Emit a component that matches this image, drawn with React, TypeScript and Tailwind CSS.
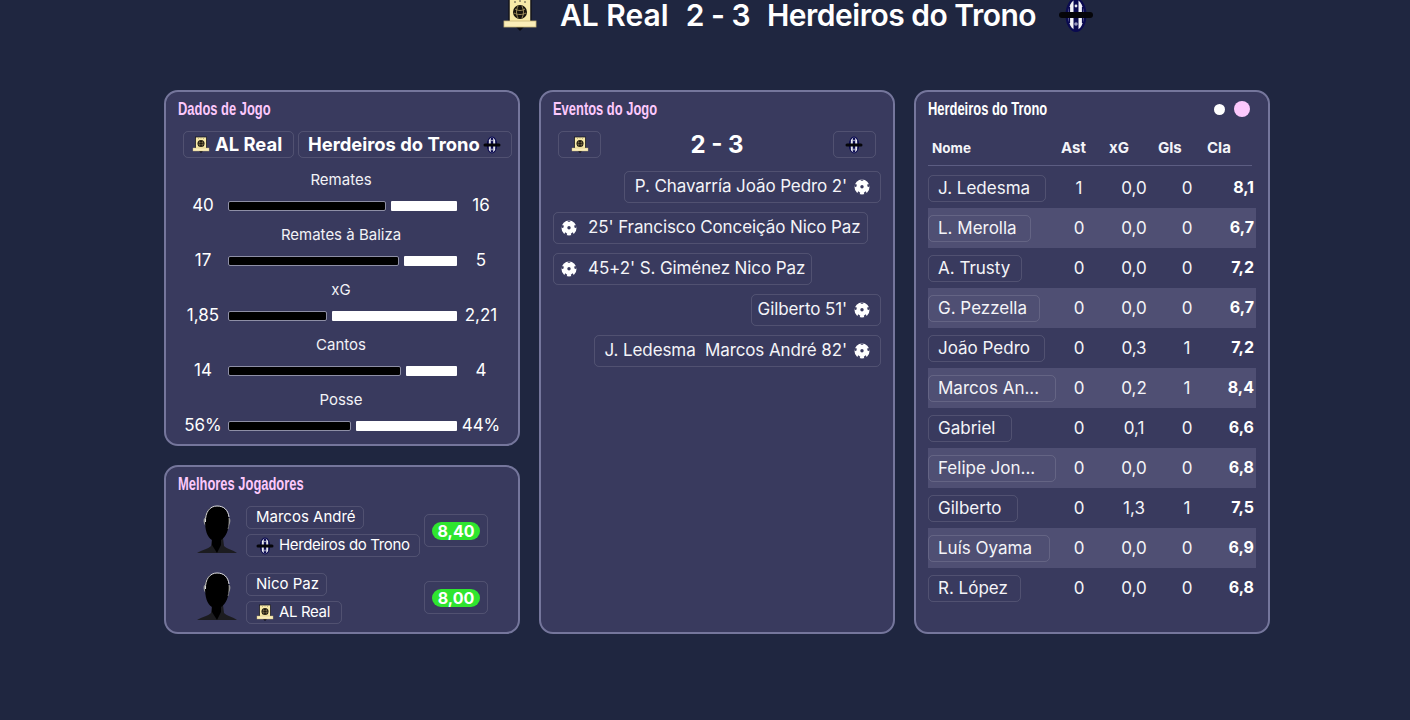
const stats = [
  { label: "Remates", home: "40", away: "16", left: 158 },
  { label: "Remates à Baliza", home: "17", away: "5", left: 171 },
  { label: "xG", home: "1,85", away: "2,21", left: 99 },
  { label: "Cantos", home: "14", away: "4", left: 173 },
  { label: "Posse", home: "56%", away: "44%", left: 123 },
];

const events = [
  { side: "away", text: "P. Chavarría João Pedro 2'", pad: "pl-[10px]" },
  { side: "home", text: "25' Francisco Conceição Nico Paz", pad: "pr-[6px] pl-[7px]" },
  { side: "home", text: "45+2' S. Giménez Nico Paz", pad: "pr-[6px] pl-[7px]" },
  { side: "away", text: "Gilberto 51'", pad: "pl-[6px]" },
  { side: "away", text: "J. Ledesma  Marcos André 82'", pad: "pl-[10px]" },
];

const players = [
  { name: "J. Ledesma", w: 118, ast: "1", xg: "0,0", gls: "0", cla: "8,1" },
  { name: "L. Merolla", w: 103, ast: "0", xg: "0,0", gls: "0", cla: "6,7" },
  { name: "A. Trusty", w: 94, ast: "0", xg: "0,0", gls: "0", cla: "7,2" },
  { name: "G. Pezzella", w: 112, ast: "0", xg: "0,0", gls: "0", cla: "6,7" },
  { name: "João Pedro", w: 117, ast: "0", xg: "0,3", gls: "1", cla: "7,2" },
  { name: "Marcos An...", w: 128, ast: "0", xg: "0,2", gls: "1", cla: "8,4" },
  { name: "Gabriel", w: 84, ast: "0", xg: "0,1", gls: "0", cla: "6,6" },
  { name: "Felipe Jon...", w: 128, ast: "0", xg: "0,0", gls: "0", cla: "6,8" },
  { name: "Gilberto", w: 90, ast: "0", xg: "1,3", gls: "1", cla: "7,5" },
  { name: "Luís Oyama", w: 122, ast: "0", xg: "0,0", gls: "0", cla: "6,9" },
  { name: "R. López", w: 93, ast: "0", xg: "0,0", gls: "0", cla: "6,8" },
];

function RealCrest({ size }: { size: number }) {
  return (
    <svg width={size} height={size} viewBox="0 0 36 36" className="shrink-0">
      <path d="M14 30h8l-4 4z" fill="#0b0b12" />
      <rect x="7" y="2" width="22" height="24" fill="#f8eaa8" stroke="#14141c" strokeWidth="1.5" />
      <circle cx="18" cy="15" r="7" fill="#17130c" />
      <path d="M13 12c3 2 7 2 10 0M12 16c4 2 8 2 12 0M16 9c-2 4-2 8 0 12M20 9c2 4 2 8 0 12" stroke="#b8a369" strokeWidth="0.8" fill="none" />
      <circle cx="13" cy="5" r="0.7" fill="#14141c" />
      <circle cx="18" cy="4" r="0.7" fill="#14141c" />
      <circle cx="23" cy="5" r="0.7" fill="#14141c" />
      <rect x="2" y="24" width="32" height="6" fill="#fbeeb9" stroke="#c9b677" strokeWidth="0.8" />
    </svg>
  );
}

function TronoCrest({ size }: { size: number }) {
  return (
    <svg width={size} height={size} viewBox="0 0 36 36" className="shrink-0">
      <ellipse cx="18" cy="18" rx="10.5" ry="17" fill="#0a0a50" />
      <ellipse cx="18" cy="18" rx="8" ry="15" fill="#f2f2f6" />
      <path d="M15.500 3h5v30h-5z" fill="#0a0a50" />
      <path d="M10.500 10h1.600v16h-1.600zM23.900 10h1.600v16h-1.600z" fill="#0a0a50" />
      <circle cx="18" cy="9" r="1.400" fill="#e8e8ee" />
      <circle cx="18" cy="27" r="1.800" fill="#9a9abd" />
      <rect x="1" y="15" width="34" height="6" rx="3" fill="#050509" />
    </svg>
  );
}

function BallIcon() {
  return (
    <svg width="16" height="16" viewBox="0 0 16 16" className="shrink-0">
      <circle cx="8" cy="8" r="7.500" fill="#fff" />
      <path d="M8 0.200l1.600 1.600H6.400zM0.400 5.600l2-0.600 0.400 2.200-2 1zM15.600 5.600l-2-0.600-0.400 2.200 2 1zM3.200 14.200l1-2 2 1.600-0.600 1.800zM12.800 14.200l-1-2-2 1.600 0.600 1.800z" fill="#393a5e" />
      <circle cx="8" cy="7.800" r="1.700" fill="#393a5e" />
    </svg>
  );
}

function Silhouette() {
  return (
    <svg width="42" height="50" viewBox="0 0 42 50" className="shrink-0">
      <path d="M1 48c5-3 11-4 14-7l1-8h11l1 8c3 3 9 4 13 7z" fill="#1c1c20" />
      <path d="M9 13c-2 0-2 6 1 8zM33 13c2 0 2 6-1 8z" fill="#9a9a9a" />
      <path d="M9 15C9 6 14 1 21 1s12 5 12 14c0 10-3 17-8 20v5l-4 8-5-8v-5c-5-3-7-10-7-20z" fill="#000" />
      <path d="M9.500 17C9 7 14 1 21 1s11 4 12 11" fill="none" stroke="#f5f5f5" strokeWidth="0.900" />
      <path d="M33 13c.4 4 0 8-1 11" fill="none" stroke="#8d8d8d" strokeWidth="0.800" />
    </svg>
  );
}

function Pill({ className, children }: { className?: string; children: React.ReactNode }) {
  return (
    <div className={`flex items-center rounded-[5px] border border-white/[0.12] ${className ?? ""}`}>
      {children}
    </div>
  );
}

function PanelTitle({ children, white }: { children: React.ReactNode; white?: boolean }) {
  return (
    <h2
      className={`origin-left scale-x-[0.68] font-['Liberation_Sans',sans-serif] text-[19px] leading-[18px] font-bold whitespace-nowrap ${white ? "text-white" : "text-[#fcc8fc]"}`}
    >
      {children}
    </h2>
  );
}

function Panel({ className, children }: { className?: string; children: React.ReactNode }) {
  return (
    <section className={`rounded-[14px] border-2 border-[#75769c] bg-[#393a5e] px-3 pt-2 ${className ?? ""}`}>
      {children}
    </section>
  );
}

function MatchStats() {
  return (
    <Panel className="h-[356px]">
      <PanelTitle>Dados de Jogo</PanelTitle>
      <div className="mt-[13px] ml-[5px] flex gap-1 text-[18.4px] font-bold text-white">
        <Pill className="h-[27px] w-[111px] shrink-0 gap-[5px] pl-2">
          <RealCrest size={18} />
          AL Real
        </Pill>
        <Pill className="h-[27px] w-[214px] shrink-0 gap-[3px] pl-[9px] whitespace-nowrap">
          Herdeiros do Trono
          <TronoCrest size={18} />
        </Pill>
      </div>
      <div className="mt-[13px] flex flex-col gap-[10px]">
        {stats.map((s) => (
          <div key={s.label} className="text-white">
            <p className="pr-[2px] text-center text-[15px] leading-[18px] text-[#f2f2f6]">{s.label}</p>
            <div className="mt-[7px] flex h-[20px] items-center">
              <span className="w-[50px] text-center text-[17px]">{s.home}</span>
              <div className="flex w-[229px] gap-[5px]">
                <div className="h-[10px] rounded-[2px] border border-[#8e8fa6] bg-black" style={{ width: s.left }} />
                <div className="h-[10px] flex-1 rounded-[1px] bg-white" />
              </div>
              <span className="w-[48px] text-center text-[17px]">{s.away}</span>
            </div>
          </div>
        ))}
      </div>
    </Panel>
  );
}

function BestPlayers() {
  const rows = [
    { name: "Marcos André", club: "Herdeiros do Trono", rating: "8,40", nameW: 118, clubW: 174, crest: <TronoCrest size={18} /> },
    { name: "Nico Paz", club: "AL Real", rating: "8,00", nameW: 81, clubW: 96, crest: <RealCrest size={18} /> },
  ];
  return (
    <Panel className="h-[169px]">
      <PanelTitle>Melhores Jogadores</PanelTitle>
      <div className="mt-[13px] flex flex-col gap-[16px]">
        {rows.map((r) => (
          <div key={r.name} className="flex h-[51px] items-center text-[15px] text-white">
            <div className="mr-[8px] mb-[3px] ml-[18px]">
              <Silhouette />
            </div>
            <div className="flex w-[178px] flex-col gap-[5px]">
              <div style={{ width: r.nameW }}>
                <Pill className="h-[23px] pl-[9px] whitespace-nowrap">{r.name}</Pill>
              </div>
              <div style={{ width: r.clubW }}>
                <Pill className="h-[23px] gap-[5px] pl-[9px] whitespace-nowrap">
                  {r.crest}
                  <span className="tracking-[-0.35px]">{r.club}</span>
                </Pill>
              </div>
            </div>
            <Pill className="mb-[2px] h-[33px] w-[64px] justify-center">
              <span className="flex h-[18px] w-[48px] items-center justify-center rounded-full bg-[#2fe52f] text-[16px] font-bold text-white">
                {r.rating}
              </span>
            </Pill>
          </div>
        ))}
      </div>
    </Panel>
  );
}

function MatchEvents() {
  return (
    <Panel className="h-[544px]">
      <PanelTitle>Eventos do Jogo</PanelTitle>
      <div className="mt-[13px] flex h-[27px] items-center justify-between px-[5px]">
        <Pill className="h-[27px] w-[43px] justify-center">
          <RealCrest size={18} />
        </Pill>
        <span className="text-[24px] leading-[27px] font-bold text-white">2 - 3</span>
        <Pill className="h-[27px] w-[43px] justify-center">
          <TronoCrest size={18} />
        </Pill>
      </div>
      <div className="mt-[13px] flex flex-col gap-[9px] text-[17px] tracking-[-0.1px] text-[#f4f4f8]">
        {events.map((e) =>
          e.side === "away" ? (
            <div key={e.text} className="flex justify-end">
              <Pill className={`h-[32px] gap-[7px] pr-[10px] whitespace-pre ${e.pad}`}>
                <span>{e.text}</span>
                <BallIcon />
              </Pill>
            </div>
          ) : (
            <div key={e.text} className="flex justify-start">
              <Pill className={`h-[32px] gap-[11px] whitespace-pre ${e.pad}`}>
                <BallIcon />
                <span>{e.text}</span>
              </Pill>
            </div>
          ),
        )}
      </div>
    </Panel>
  );
}

function TeamTable() {
  return (
    <Panel className="h-[544px]">
      <div className="flex items-center justify-between pr-[6px]">
        <PanelTitle white>Herdeiros do Trono</PanelTitle>
        <div className="flex items-center gap-[9px]">
          <span className="h-[11px] w-[11px] rounded-full bg-white" />
          <span className="h-4 w-4 rounded-full bg-[#fcc8fc]" />
        </div>
      </div>
      <div className="mt-[13px] mr-[4px] grid h-[35px] grid-cols-[133px_48px_49px_49px_1fr] items-center border-b border-[#5c5d82] text-[15px] font-bold text-[#f4f4f8]">
        <span className="pl-[4px] text-[13.5px]">Nome</span>
        <span>Ast</span>
        <span>xG</span>
        <span>Gls</span>
        <span>Cla</span>
      </div>
      <div className="mt-[2px]">
        {players.map((p, i) => (
          <div
            key={p.name}
            className={`grid h-[40px] grid-cols-[128px_46px_64px_42px_1fr] items-center pr-[2px] text-[17px] text-[#f4f4f8] ${i % 2 === 1 ? "bg-[#4f4f73]" : ""}`}
          >
            <div style={{ width: p.w }}>
              <Pill className="h-[27px] pl-[9px] whitespace-nowrap">
                <span className="pt-[1px]">{p.name}</span>
              </Pill>
            </div>
            <span className="pt-[2px] text-center">{p.ast}</span>
            <span className="pt-[2px] text-center">{p.xg}</span>
            <span className="pt-[2px] text-center">{p.gls}</span>
            <span className="pb-[2px] text-right text-[16px] leading-[20px] font-bold text-white">{p.cla}</span>
          </div>
        ))}
      </div>
    </Panel>
  );
}

export default function App() {
  return (
    <div className="h-[720px] w-full overflow-hidden bg-[#1f2640] font-['Inter','Noto_Sans',sans-serif]">
      <header className="flex h-[30px] items-center justify-center pl-[186px] text-[30px] leading-[30px] font-semibold whitespace-pre text-white">
        <RealCrest size={36} />
        <div className="mr-[22px] ml-[22px] flex gap-[17px]">
          <span>AL Real</span>
          <span className="tracking-[-0.5px]">2 - 3</span>
          <span className="tracking-[-0.5px]">Herdeiros do Trono</span>
        </div>
        <TronoCrest size={36} />
      </header>
      <main className="mt-[60px] ml-[164px] grid w-[1106px] grid-cols-[356px_356px_356px] gap-[19px]">
        <div className="flex flex-col gap-[19px]">
          <MatchStats />
          <BestPlayers />
        </div>
        <MatchEvents />
        <TeamTable />
      </main>
    </div>
  );
}
